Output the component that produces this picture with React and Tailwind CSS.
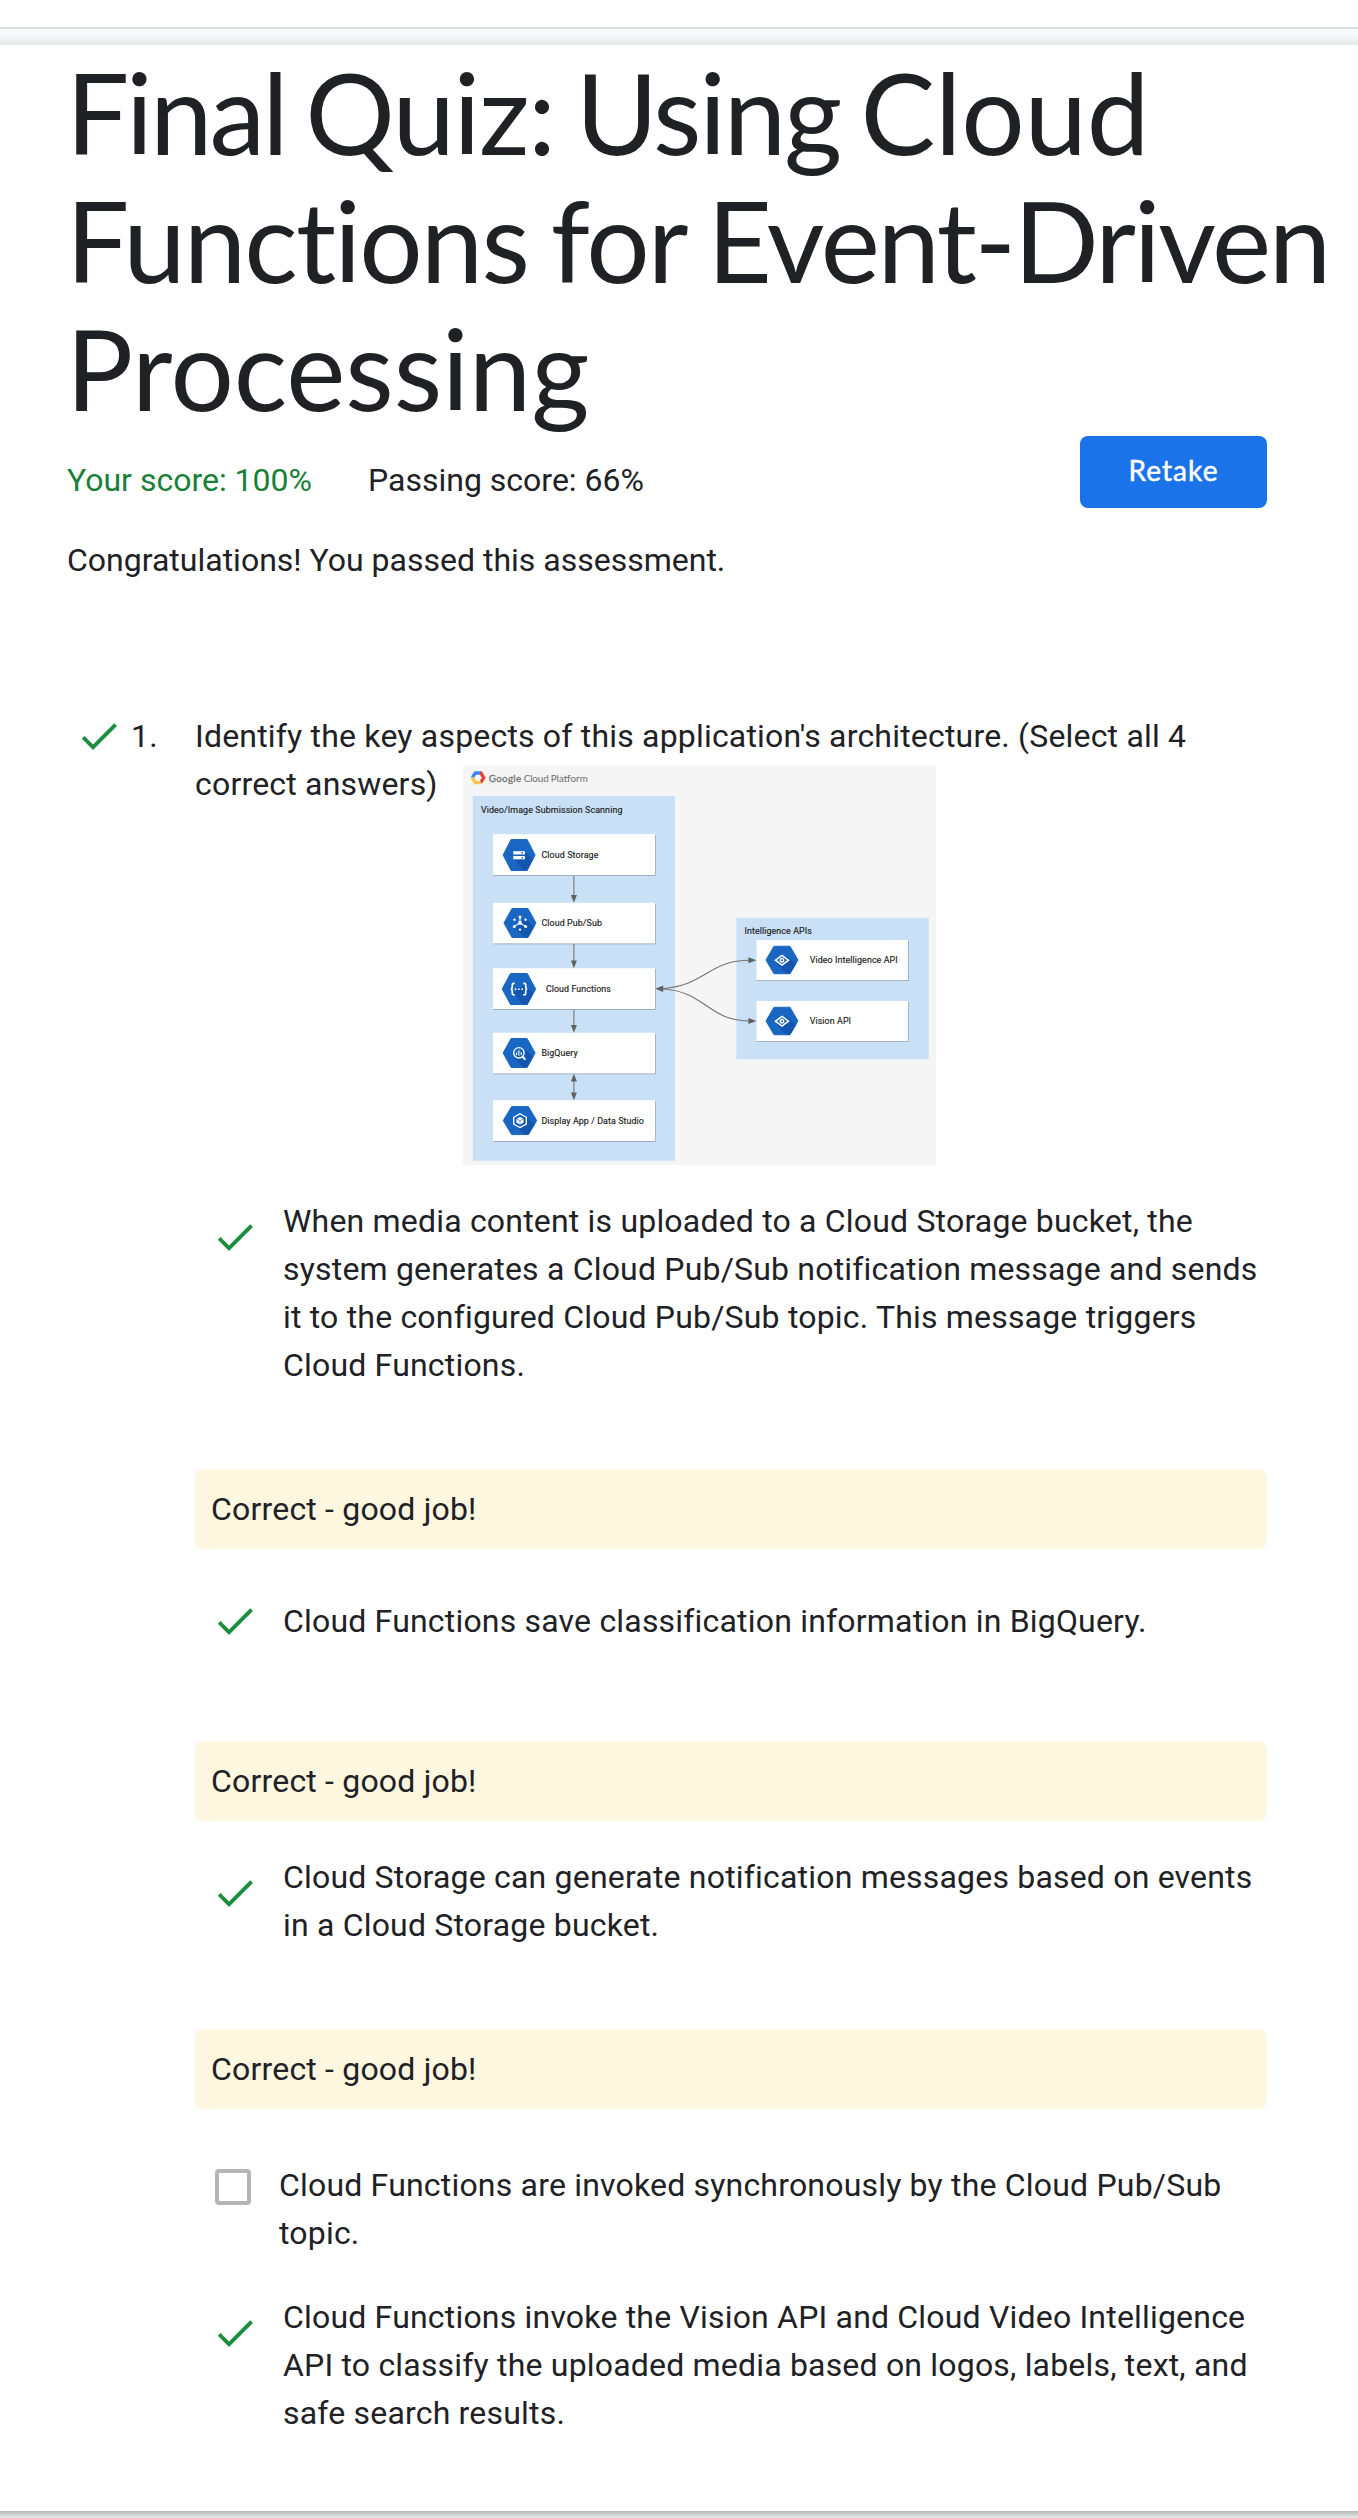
const Check = ({ className = "" }) => (
  <svg viewBox="0 0 24 24" className={`h-12 w-12 shrink-0 ${className}`} fill="#1e8e3e">
    <path d="M9 16.2L4.8 12l-1.4 1.4L9 19 21 7l-1.4-1.4L9 16.2z" />
  </svg>
);

const Feedback = () => (
  <div className="ml-[128px] h-20 rounded-lg bg-[#fef7e0] p-4">Correct - good job!</div>
);

const Hex = ({ x, y, w = 32, h = 31 }) => (
  <g transform={`translate(${x} ${y})`}>
    <path
      d={`M${-w / 2} 0L${-w / 4} ${-h / 2}H${w / 4}L${w / 2} 0L${w / 4} ${h / 2}H${-w / 4}Z`}
      fill="#1967c3"
      stroke="#1967c3"
      strokeWidth="1"
      strokeLinejoin="round"
    />
    <path d={`M-5 4L5 -4L${w / 2 - 2} 4L${w / 4} ${h / 2}H4Z`} fill="#1455ad" />
  </g>
);

const Node = ({ x, y, w = 162, h = 40.7, label, tx, tw }) => (
  <g>
    <rect x={x + 0.3} y={y + 0.8} width={w + 0.3} height={h} rx="0.5" fill="#8d9aa5" />
    <rect x={x} y={y} width={w} height={h} rx="0.5" fill="#fff" />
    <text x={tx} y={y + h / 2 + 3.2} textLength={tw} fontSize="8.9" fill="#212121" stroke="#212121" strokeWidth="0.15">
      {label}
    </text>
  </g>
);

const Eye = ({ x, y }) => (
  <g transform={`translate(${x} ${y})`} fill="none" stroke="#fff" strokeWidth="1.5">
    <path d="M-6.5 0L0 -4.8L6.5 0L0 4.8Z" />
    <circle r="1.7" />
  </g>
);

const Diagram = () => (
  <svg
    viewBox="0.3 0 473.3 400"
    className="ml-[25px] inline-block h-[400px] w-[473.3px] align-text-top tracking-normal"
    fontFamily="Roboto, sans-serif"
  >
    <rect width="474" height="400" fill="#f5f5f5" />
    <g fill="none" strokeWidth="3.4">
      <path d="M9.6 12.6L12.6 8H18.2" stroke="#4285f4" />
      <path d="M17.4 8H18.2L21 12.8L18 17.6" stroke="#ea4335" />
      <path d="M9.6 12.6L12.6 17.6H18" stroke="#fbc34a" />
    </g>
    <g fontSize="9.8" fill="#757575" fontFamily="Lato, sans-serif" stroke="#757575">
      <text x="26" y="16.6" textLength="32.5" strokeWidth="0.3">Google</text>
      <text x="61" y="16.6" textLength="25" strokeWidth="0.1">Cloud</text>
      <text x="88" y="16.6" textLength="37" strokeWidth="0.1">Platform</text>
    </g>

    <rect x="10" y="31" width="202.3" height="364.7" fill="#c9e0f7" />
    <rect x="273.7" y="152.7" width="192.3" height="141.6" fill="#c9e0f7" />
    <g fontSize="8.9" fill="#212121" stroke="#212121" strokeWidth="0.15">
      <text x="18.2" y="47.6" textLength="141.5">Video/Image Submission Scanning</text>
      <text x="281.8" y="169.3" textLength="67.3">Intelligence APIs</text>
    </g>

    <Node x={30.3} y={69.3} label="Cloud Storage" tx={78.7} tw={57} />
    <Node x={30.3} y={137.7} label="Cloud Pub/Sub" tx={78.7} tw={60.5} />
    <Node x={30.3} y={203.3} label="Cloud Functions" tx={83.2} tw={65} />
    <Node x={30.3} y={267.7} label="BigQuery" tx={78.7} tw={36.3} />
    <Node x={30.3} y={335.3} label="Display App / Data Studio" tx={78.7} tw={102.5} />
    <Node x={293.7} y={175} w={151.6} h={40.3} label="Video Intelligence API" tx={347} tw={88} />
    <Node x={293.7} y={236} w={151.6} h={40.3} label="Vision API" tx={347} tw={41.3} />

    <g fill="none" stroke="#757575" strokeWidth="1.1">
      <path d="M111.2 111V134M111.2 179V200M111.2 245V264M111.2 312V332" />
      <path d="M198 223.7C244 221 244 195.3 288 195.3" />
      <path d="M198 223.7C244 226 244 256 288 256" />
    </g>
    <g fill="#616161">
      <path d="M108.2 130h6l-3 7.7z M108.2 195.6h6l-3 7.7z M108.2 260h6l-3 7.7z M108.2 327.6h6l-3 7.7z M108.2 316.5h6l-3 -7.7z" />
      <path d="M192.5 223.7l8 -3.2v6.4z M293.7 195.3l-8 -3v6z M293.7 256l-8 -3v6z" />
    </g>

    <Hex x={56.4} y={90} />
    <Hex x={57.3} y={158} h={29} />
    <Hex x={56.2} y={224} w={33.5} h={31} />
    <Hex x={56.4} y={288} w={32} h={29} />
    <Hex x={57.3} y={355.6} w={33.5} h={28} />
    <Hex x={319.3} y={195} h={27.5} />
    <Hex x={319.3} y={256} h={27.5} />

    <g fill="#fff">
      <rect x="50.6" y="86.2" width="11.6" height="3.3" />
      <rect x="50.6" y="91" width="11.6" height="3.3" />
      <path d="M58.8 87.1h1.4v1.5h-1.4z M58.8 91.9h1.4v1.5h-1.4z" fill="#1967c3" />
      <circle cx="57.3" cy="158" r="2" />
      <circle cx="57.3" cy="152" r="1.5" />
      <circle cx="51.6" cy="161.4" r="1.5" />
      <circle cx="63" cy="161.4" r="1.5" />
      <circle cx="57.3" cy="164.6" r="1.2" />
      <circle cx="51.8" cy="154.8" r="1.2" />
      <circle cx="62.8" cy="154.8" r="1.2" />
      <circle cx="52.9" cy="224.2" r="0.9" />
      <circle cx="56.2" cy="224.2" r="0.9" />
      <circle cx="59.5" cy="224.2" r="0.9" />
    </g>
    <g fill="none" stroke="#fff" strokeWidth="1.4">
      <path d="M57.3 158V152M57.3 158L51.6 161.4M57.3 158L63 161.4" strokeWidth="1.1" />
      <path
        d="M52 218.4h-1.2q-1.2 0 -1.2 1.3v2.6l-.8 1.8l.8 1.8v2.6q0 1.3 1.2 1.3h1.2M60.6 218.4h1.2q1.2 0 1.2 1.3v2.6l.8 1.8l-.8 1.8v2.6q0 1.3 -1.2 1.3h-1.2"
        strokeWidth="1.7"
      />
      <circle cx="56.2" cy="287.8" r="5.2" />
      <path d="M60 291.8L62.6 294.6" strokeWidth="2" />
      <path d="M53.9 287.6v2.6M56.2 285.2v5.6M58.5 287v3" strokeWidth="1.1" />
      <path d="M57.3 348.8L63.6 352.3V359L57.3 362.5L51 359V352.3Z" strokeWidth="1.3" />
      <path d="M57.3 352.3L60.6 354V357.6L57.3 359.4L54 357.6V354Z" fill="#fff" strokeWidth="0.4" />
      <path d="M54 354.1L57.3 355.8L60.6 354.1M57.3 355.8V359.4" stroke="#1967c3" strokeWidth="0.6" />
    </g>
    <Eye x={319.3} y={195.2} />
    <Eye x={319.3} y={256.2} />
  </svg>
);

const Answer = ({ className = "", checkClass = "mt-4", children }) => (
  <div className={`flex pl-[144px] ${className}`}>
    <Check className={checkClass} />
    <div className="ml-6 min-w-0 flex-1">{children}</div>
  </div>
);

export default function App() {
  return (
    <div className="flex h-[2518px] w-[1358px] flex-col overflow-hidden bg-[#e8eaea] font-['Roboto',sans-serif] text-[32px] leading-[48px] tracking-[0.19px] text-[#202124]">
      <div className="h-[29px] shrink-0 border-b-2 border-[#dadce0] bg-white" />
      <div className="h-4 shrink-0 bg-gradient-to-b from-[#f8f9fa] from-30% to-[#e8e9eb]" />
      <main className="h-[2466px] shrink-0 bg-white pl-[67px] pr-[91px]">
        <h1 className="-ml-px -mr-[91px] h-[391px] whitespace-nowrap pt-[3px] font-['Lato',sans-serif] text-[112px] leading-[128px]">
          <span className="block tracking-[-2px] [word-spacing:-6px]">
            <span className="tracking-[-3px]">Final </span>
            <span className="tracking-[-1.5px]">Quiz: </span>
            <span className="tracking-[-2.3px]">Using </span>
            <span className="tracking-[-0.2px]">Cloud</span>
          </span>
          <span className="block tracking-[-1.9px] [word-spacing:-4px]">
            Functions for <span className="tracking-[-2.4px]">Event-Driven</span>
          </span>
          <span className="block tracking-[-0.1px]">Processing</span>
        </h1>
        <div className="flex h-[100px] items-start tracking-normal">
          <span className="mt-5 w-[301px] text-[#188038]">Your score: 100%</span>
          <span className="mt-5">Passing score: 66%</span>
          <button className="ml-auto h-[72px] w-[187px] rounded-lg bg-[#1a73e8] pb-[5px] font-['Lato',sans-serif] text-[28px] tracking-[1.1px] text-white [-webkit-text-stroke:0.5px_white]">
            Retake
          </button>
        </div>
        <p className="h-[176px] tracking-normal">Congratulations! You passed this assessment.</p>
        <section>
          <div className="flex">
            <Check className="ml-2" />
            <span className="ml-2 w-16">1.</span>
            <div className="h-[485px] flex-1">
              Identify the key aspects of this application's architecture. (Select all 4
              <br />
              correct answers)
              <Diagram />
            </div>
          </div>
          <Answer className="h-[272px]">
            When media content is uploaded to a Cloud Storage bucket, the system generates a Cloud Pub/Sub
            notification message and sends it to the configured Cloud Pub/Sub topic. This message triggers Cloud
            Functions.
          </Answer>
          <Feedback />
          <Answer className="h-[192px] pt-12" checkClass="mt-0">
            Cloud Functions save classification information in BigQuery.
          </Answer>
          <Feedback />
          <Answer className="h-[208px] pt-8">
            Cloud Storage can generate notification messages based on events in a Cloud Storage bucket.
          </Answer>
          <Feedback />
          <div className="flex h-[184px] pl-[148px] pt-[52px]">
            <span className="mt-2 h-9 w-9 shrink-0 rounded-[4px] border-4 border-[#b5b5b5]" />
            <div className="ml-7">Cloud Functions are invoked synchronously by the Cloud Pub/Sub topic.</div>
          </div>
          <Answer>
            Cloud Functions invoke the Vision API and Cloud Video Intelligence API to classify the uploaded media
            based on logos, labels, text, and safe search results.
          </Answer>
        </section>
      </main>
      <div className="h-[7px] bg-gradient-to-b from-[#b4b7b8] to-[#e8eaea]" />
    </div>
  );
}
